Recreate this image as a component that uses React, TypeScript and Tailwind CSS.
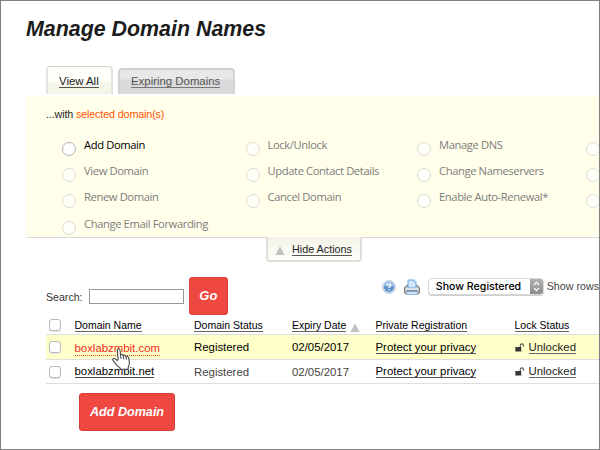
import React from "react";

const actions: string[][] = [
  ["Add Domain", "Lock/Unlock", "Manage DNS", " "],
  ["View Domain", "Update Contact Details", "Change Nameservers", " "],
  ["Renew Domain", "Cancel Domain", "Enable Auto-Renewal*", " "],
  ["Change Email Forwarding"],
];

const Triangle = () => (
  <svg width="10" height="9" viewBox="0 0 10 9" className="shrink-0">
    <path d="M5 0.3 9.6 9H.4Z" fill="#c2c2c2" />
  </svg>
);

const Radio = ({ active }: { active: boolean }) => (
  <span
    className={
      active
        ? "mt-[6px] size-[14px] shrink-0 rounded-full border border-[#b4b4b0] bg-white"
        : "mt-[6px] size-[14px] shrink-0 rounded-full border border-[#dcdcd0] bg-[#fffffa]"
    }
  />
);

const Checkbox = () => (
  <span className="block size-[12px] rounded-[3px] border border-[#b9b9b9] bg-white shadow-[0_1px_0_#e4e4e4]" />
);

const HelpIcon = () => (
  <svg width="14" height="14" viewBox="0 0 14 14">
    <circle cx="7" cy="7" r="6.5" fill="#c9d9ea" stroke="#b8c9dc" strokeWidth=".8" />
    <circle cx="7" cy="7" r="5" fill="#5b93cd" />
    <path d="M2.4 5.8a4.7 4.7 0 0 1 9.2 0Q7 7.8 2.4 5.8Z" fill="#9cc0e6" />
    <path d="M5.2 5.5q.1-1.7 1.8-1.7 1.8 0 1.8 1.5 0 .9-1 1.4-.8.5-.8 1.3" fill="none" stroke="#fff" strokeWidth="1.3" />
    <circle cx="7" cy="9.9" r=".8" fill="#fff" />
  </svg>
);

const PrinterIcon = () => (
  <svg width="16" height="17" viewBox="0 0 16 17">
    <path d="M.6 8.4 2.6 6.400h10.800l2 2v5.400q0 .9-.9.9h-13q-.9 0-.9-.9Z" fill="#b9bcc1" stroke="#6b6f75" strokeWidth="1" />
    <path d="M4 9V1h6.2L12 2.8V9Z" fill="#cfe6fb" stroke="#6fa8da" strokeWidth="1" />
    <path d="M10 1v2h2" fill="#fff" stroke="#6fa8da" strokeWidth=".7" />
    <path d="M1.4 9.2h13.2v2.100H1.4Z" fill="#e6e8ea" />
    <path d="M2.500 12h11" stroke="#565b62" strokeWidth="1.2" />
    <path d="M2.9 12.700h10.200l.3 2.800H2.600Z" fill="#d4e9fc" stroke="#79afe0" strokeWidth=".8" />
  </svg>
);

const LockIcon = () => (
  <svg width="10" height="9" viewBox="0 0 10 9" className="shrink-0">
    <rect x=".3" y="3.9" width="6" height="4.7" rx=".4" fill="#3b3637" />
    <path d="M5.3 4.2V2.6q0-1.7 1.6-1.7 1.5 0 1.5 1.7v1.2" fill="none" stroke="#5a5656" strokeWidth="1.1" />
  </svg>
);

const Hand = () => (
  <svg width="19" height="23" viewBox="0 0 19 23" className="absolute left-[111px] top-[347px]">
    <path
      d="M5.3 2.2Q5.3.8 6.6.8 7.9.8 8 2.2l.6 5.2q.3-1.2 1.4-1.1 1.1.1 1.3 1.7.4-1 1.4-.8 1 .2 1.3 1.5.4-.7 1.3-.4 1.1.4 1.5 2.3l.6 3.7q.2 2.8-1.1 4.5l-.3 2.4H8.500l-.8-1.6Q4.5 17.4 3.4 15.4 2.3 13.6 1 12.4q-.7-1.2.4-1.7 1.2-.5 2.5.6l1.3 1.2q.9-.3.9-1.4Z"
      fill="#fff"
      stroke="#41464d"
      strokeWidth="1.1"
      strokeLinejoin="round"
    />
    <path d="M8.6 7.4l.5 3.6M11.3 8l.5 3.3M14 8.7l.4 3" stroke="#41464d" strokeWidth="1" fill="none" />
  </svg>
);

const link = "inline-block border-b border-[#666] leading-[12px]";

export default function App() {
  return (
    <div className="relative h-[450px] w-[600px] overflow-hidden border border-[#808080] bg-white font-['Liberation_Sans',Arial,sans-serif] text-[11.4px] whitespace-nowrap text-[#222]">
      <h1 className="ml-[25px] mt-[15px] h-[26px] text-[21.4px] leading-[26px] font-bold italic text-[#1c1c1c]">Manage Domain Names</h1>

      <div className="ml-[45px] mt-[24px] flex h-[29px] items-start gap-[5px]">
        <div className="flex h-[28px] w-[67px] rounded-t-[4px] border-x-2 border-t border-[#e2e2de] border-t-[#d4d4d0] bg-linear-to-b from-[#fffffa] from-50% to-[#f5f5ea] to-60% pt-[8px] pl-[11px] text-[11.4px]">
          <span className="h-[13px] border-b border-[#555] leading-[12px]">View All</span>
        </div>
        <div className="mt-[2px] flex h-[26px] w-[117px] rounded-t-[4px] border-x-2 border-t-2 border-[#d2d2d2] bg-linear-to-b from-[#e8e8e8] from-35% to-[#dadada] to-45% pt-[5px] pl-[11px] text-[11.4px] text-[#555]">
          <span className="h-[13px] border-b border-[#777] leading-[12px]">Expiring Domains</span>
        </div>
      </div>

      <section className="ml-[25px] mt-px h-[142px] border-b border-[#d8d8d8] bg-[#ffffec]">
        <p className="pt-[11px] pl-[20px] text-[10.8px] leading-[14px] tracking-[-0.16px]">
          ...with <span className="text-[#ff5500]">selected domain(s)</span>
        </p>
        <div className="mt-[15px] pl-[36px] font-['Open_Sans','Noto_Sans',sans-serif] text-[11.2px] tracking-[-0.38px] text-[#7e7e7b]">
          {actions.map((row, r) => (
            <div key={r} className="grid h-[26.2px] grid-cols-[183.5px_171.5px_168.5px_40px] items-start">
              {row.map((label, c) => (
                <div key={c} className="flex gap-[8px]">
                  <Radio active={r === 0 && c === 0} />
                  <span className={r === 0 && c === 0 ? "leading-[18px] text-black" : "leading-[18px]"}>{label}</span>
                </div>
              ))}
            </div>
          ))}
        </div>
      </section>

      <div className="ml-[265px] -mt-px flex h-[25px] w-[96px] items-start rounded-b-[4px] border-x-2 border-b-2 border-[#dededa] bg-linear-to-b from-[#f3f3e7] to-[#fffffb] pt-[6px] pl-[7px] text-[10.8px]">
        <span className="mt-[3px] flex"><Triangle /></span>
        <span className="ml-[7px] h-[13px] border-b border-[#555] leading-[12px]">Hide Actions</span>
      </div>

      <div className="ml-[45px] mt-[15px] flex h-[38px] items-start">
        <span className="mt-[13px] w-[43px] text-[10.6px] leading-[14px] text-[#333]">Search:</span>
        <span className="mt-[12px] h-[15px] w-[95px] border border-[#999] bg-white" />
        <button className="ml-[5px] h-[38px] w-[39px] rounded-[3px] border border-[#d93f38] bg-[#ee4840] text-[13px] font-bold italic text-white">Go</button>
        <span className="ml-[154px] mt-[3px]"><HelpIcon /></span>
        <span className="ml-[8px] mt-[2px]"><PrinterIcon /></span>
        <div className="ml-[8px] mt-px flex h-[17px] w-[116px] overflow-hidden rounded-[4px] border border-[#d8d8d8] bg-white shadow-[0_1px_0_#cfcfcf]">
          <span className="w-[101px] pl-[7px] font-[Inter,sans-serif] text-[10.6px] leading-[15px] font-medium text-black">Show Registered</span>
          <span className="flex w-[13px] items-center justify-center bg-linear-to-b from-[#b2b2b2] to-[#8c8c8c]">
            <svg width="7" height="11" viewBox="0 0 7 11" fill="none" stroke="#fff" strokeWidth="1.2">
              <path d="m1 4 2.5-2.7L6 4M1 7l2.5 2.7L6 7" />
            </svg>
          </span>
        </div>
        <span className="ml-[3px] mt-[2px] text-[10.7px] leading-[14px] text-[#444]">Show rows</span>
      </div>

      <div className="ml-[45px]">
        <div className="grid h-[20px] grid-cols-[28.5px_119.5px_98px_83.5px_139px_90px] items-center border-b border-[#dedede] text-[10.5px] text-black">
          <span className="pl-[3px]"><Checkbox /></span>
          <span className="flex pt-px"><a className={link}>Domain Name</a></span>
          <span className="flex pt-px"><a className={link}>Domain Status</a></span>
          <span className="flex items-end gap-[4px] pt-px"><a className={link}>Expiry Date</a><Triangle /></span>
          <span className="flex pt-px"><a className={link}>Private Registration</a></span>
          <span className="flex pt-px"><a className={link}>Lock Status</a></span>
        </div>
        {["boxlabzmbit.com", "boxlabzmbit.net"].map((name, i) => (
          <div
            key={name}
            className={
              i === 0
                ? "grid h-[25px] grid-cols-[28.5px_119.5px_98px_83.5px_139px_90px] items-center border-b border-[#dedede] bg-[#ffffca] text-black"
                : "grid h-[24px] grid-cols-[28.5px_119.5px_98px_83.5px_139px_90px] items-center border-b border-[#dedede] text-[#444]"
            }
          >
            <span className="pl-[3px]"><Checkbox /></span>
            <span className="flex">
              <a className={i === 0 ? "mt-[2px] inline-block border-b border-dotted border-[#f04030] leading-[14px] text-[#f52c22]" : "inline-block border-b border-[#444] leading-[12px] text-black"}>{name}</a>
            </span>
            <span className="leading-[14px]">Registered</span>
            <span className="leading-[14px]">02/05/2017</span>
            <span className="flex"><a className="inline-block border-b border-[#555] leading-[12px] text-black">Protect your privacy</a></span>
            <span className="flex items-center gap-[4px]">
              <LockIcon />
              <a className={link}><span className="text-[#222]">Unlocked</span></a>
            </span>
          </div>
        ))}
      </div>

      <button className="ml-[78px] mt-[9px] block h-[38px] w-[96px] rounded-[3px] border border-[#d93f38] bg-[#ee4840] text-[12.6px] font-bold italic text-white">Add Domain</button>
      <Hand />
    </div>
  );
}
